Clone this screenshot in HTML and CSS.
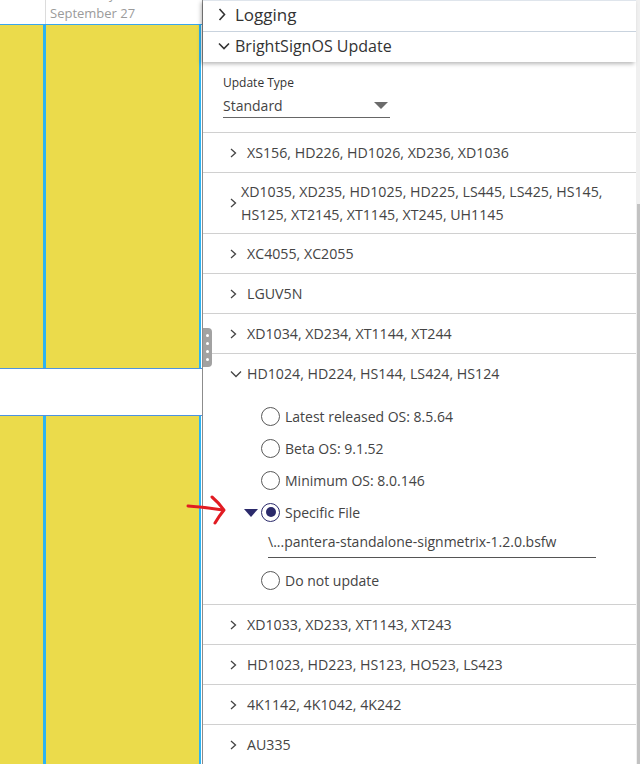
FILE: index.html
```html
<!DOCTYPE html>
<html lang="en">
<head>
  <meta charset="UTF-8">
  <title>BrightSignOS Update</title>
  <link rel="stylesheet" href="styles.css">
</head>
<body>

  <div class="screen">

    <div class="calendar">
      <div class="cal-head">
        <div class="time-col"></div>
        <div class="day-col">
          <div class="day-name">Wednesday</div>
          <div class="day-date">September 27</div>
        </div>
      </div>
      <div class="cal-block first">
        <div class="ev-prev"></div>
        <div class="ev-main"></div>
      </div>
      <div class="cal-gap"></div>
      <div class="cal-block last">
        <div class="ev-prev"></div>
        <div class="ev-main"></div>
      </div>
    </div>

    <div class="splitter">
      <span></span><span></span><span></span><span></span>
    </div>

    <div class="panel">
      <div class="card">
        <div class="acc-head logging">
          <svg class="chev-big" width="8" height="13" viewBox="0 0 8 13"><polyline points="1.5,1 6.5,6.5 1.5,12" /></svg>
          <span>Logging</span>
        </div>
        <div class="acc-head update">
          <svg class="chev-down-big" width="12" height="8" viewBox="0 0 12 8"><polyline points="1,1.5 6,6.5 11,1.5" /></svg>
          <span>BrightSignOS Update</span>
        </div>
      </div>

      <div class="update-type">
        <div class="field-label">Update Type</div>
        <div class="select">
          <span>Standard</span>
          <span class="select-arrow"></span>
        </div>
      </div>

      <div class="models">
        <div class="row">
          <svg class="chev" width="7" height="10" viewBox="0 0 7 10"><polyline points="1,1 5.5,5 1,9" /></svg>
          <span>XS156, HD226, HD1026, XD236, XD1036</span>
        </div>
        <div class="row wrap">
          <svg class="chev" width="7" height="10" viewBox="0 0 7 10"><polyline points="1,1 5.5,5 1,9" /></svg>
          <span>XD1035, XD235, HD1025, HD225, LS445, LS425, HS145,<br>HS125, XT2145, XT1145, XT245, UH1145</span>
        </div>
        <div class="row">
          <svg class="chev" width="7" height="10" viewBox="0 0 7 10"><polyline points="1,1 5.5,5 1,9" /></svg>
          <span>XC4055, XC2055</span>
        </div>
        <div class="row">
          <svg class="chev" width="7" height="10" viewBox="0 0 7 10"><polyline points="1,1 5.5,5 1,9" /></svg>
          <span>LGUV5N</span>
        </div>
        <div class="row">
          <svg class="chev" width="7" height="10" viewBox="0 0 7 10"><polyline points="1,1 5.5,5 1,9" /></svg>
          <span>XD1034, XD234, XT1144, XT244</span>
        </div>

        <div class="section open">
          <div class="row head">
            <svg class="chev-down" width="12" height="8" viewBox="0 0 12 8"><polyline points="1,1.5 6,6.5 11,1.5" /></svg>
            <span>HD1024, HD224, HS144, LS424, HS124</span>
          </div>
          <div class="options">
            <label class="option"><span class="radio"></span>Latest released OS: 8.5.64</label>
            <label class="option"><span class="radio"></span>Beta OS: 9.1.52</label>
            <label class="option"><span class="radio"></span>Minimum OS: 8.0.146</label>
            <label class="option marked"><span class="marker"></span><span class="radio checked"></span>Specific File</label>
            <div class="file-input">\...pantera-standalone-signmetrix-1.2.0.bsfw</div>
            <label class="option last"><span class="radio"></span>Do not update</label>
          </div>
        </div>

        <div class="row">
          <svg class="chev" width="7" height="10" viewBox="0 0 7 10"><polyline points="1,1 5.5,5 1,9" /></svg>
          <span>XD1033, XD233, XT1143, XT243</span>
        </div>
        <div class="row">
          <svg class="chev" width="7" height="10" viewBox="0 0 7 10"><polyline points="1,1 5.5,5 1,9" /></svg>
          <span>HD1023, HD223, HS123, HO523, LS423</span>
        </div>
        <div class="row">
          <svg class="chev" width="7" height="10" viewBox="0 0 7 10"><polyline points="1,1 5.5,5 1,9" /></svg>
          <span>4K1142, 4K1042, 4K242</span>
        </div>
        <div class="row">
          <svg class="chev" width="7" height="10" viewBox="0 0 7 10"><polyline points="1,1 5.5,5 1,9" /></svg>
          <span>AU335</span>
        </div>
        <div class="row"></div>
      </div>
    </div>

    <div class="scrollbar"><div class="thumb"></div></div>

    <!-- annotation arrow -->
    <svg class="red-arrow" width="46" height="36" viewBox="0 0 46 36">
      <path d="M4 14 Q 20 15 39 18" />
      <path d="M28 5 Q 35 11 40 18 Q 35 24 31 31" />
    </svg>

  </div>

</body>
</html>
```

FILE: styles.css
```css
body {
  margin: 0;
  font-family: "Open Sans", "Segoe UI", sans-serif;
  background-color: #fff;
}

.screen {
  position: relative;
  display: flex;
  width: 640px;
  height: 764px;
  overflow: hidden;
}

/* Calendar */
.calendar {
  width: 202px;
  flex-shrink: 0;
  display: flex;
  flex-direction: column;
  border-right: 1px solid #8c8c8c;
}

.cal-head {
  display: flex;
  height: 24px;
  overflow: hidden;
}

.time-col {
  width: 45px;
  border-right: 1px solid #dcdcdc;
}

.day-col {
  flex: 1;
  padding-left: 4px;
  margin-top: -13px;
  color: #9b9b9b;
}

.day-name {
  font-size: 12px;
  line-height: 16px;
}

.day-date {
  font-size: 13px;
  line-height: 20px;
}

.cal-block {
  display: flex;
  padding-right: 1px;
}

.cal-block.first {
  height: 343px;
  border-top: 1px solid #3aa6ee;
}

.cal-block.last {
  flex: 1;
}

.cal-gap {
  height: 46px;
  border-top: 1px solid #4d93e0;
  border-bottom: 1px solid #4d93e0;
}

.ev-prev {
  width: 43px;
  background-color: #ebdb4b;
}

.ev-main {
  flex: 1;
  background-color: #ebdb4b;
  border-left: 3px solid #2db3f2;
  border-right: 2px solid #2db3f2;
}

.splitter {
  position: absolute;
  left: 203px;
  top: 328px;
  width: 9px;
  height: 39px;
  background-color: #a2a2a2;
  border-radius: 0 4px 4px 0;
  display: flex;
  flex-direction: column;
  align-items: center;
  justify-content: space-around;
  padding: 4px 0;
  box-sizing: border-box;
  z-index: 3;
}

.splitter span {
  width: 3px;
  height: 3px;
  border-radius: 50%;
  background-color: #fff;
}

/* Panel */
.panel {
  flex: 1;
  display: flex;
  flex-direction: column;
  background-color: #fff;
}

.card {
  position: relative;
  z-index: 2;
  background-color: #fff;
  box-shadow: -2px 2px 4px rgba(0,0,0,0.28);
}

.acc-head {
  display: flex;
  align-items: center;
  padding-left: 15px;
  color: #333;
  box-sizing: border-box;
}

.acc-head.logging {
  height: 32px;
  padding-bottom: 4px;
  border-top: 1px solid #dfe5ec;
  border-bottom: 1px solid #c9d3de;
  font-size: 17px;
  gap: 9px;
}

.acc-head.update {
  height: 30px;
  padding-bottom: 2px;
  font-size: 16px;
  gap: 5px;
}

.acc-head svg polyline {
  fill: none;
  stroke: #333;
  stroke-width: 1.6;
}

.update-type {
  padding: 13px 0 14px 20px;
}

.field-label {
  font-size: 12px;
  line-height: 16px;
  color: #333;
}

.select {
  width: 167px;
  height: 23px;
  margin-top: 3px;
  border-bottom: 1px solid #666;
  display: flex;
  align-items: center;
  justify-content: space-between;
  font-size: 14px;
  color: #444;
}

.select-arrow {
  width: 0;
  height: 0;
  margin-right: 2px;
  border-left: 7px solid transparent;
  border-right: 7px solid transparent;
  border-top: 7px solid #6b6b6b;
}

.models {
  border-bottom: 1px solid #d0d0d0;
}

.row {
  display: flex;
  align-items: center;
  min-height: 39px;
  padding-left: 27px;
  border-top: 1px solid #d0d0d0;
  font-size: 14.2px;
  color: #444;
  gap: 10px;
}

.row.wrap {
  min-height: 60px;
  gap: 4px;
  line-height: 23px;
}

.row.head {
  gap: 5px;
}

.row svg polyline {
  fill: none;
  stroke: #444;
  stroke-width: 1.3;
}

.options {
  padding: 7px 0 8px 58px;
}

.option {
  position: relative;
  display: flex;
  align-items: center;
  gap: 5px;
  height: 32px;
  font-size: 14px;
  color: #444;
}

.option.last {
  margin-top: 6px;
}

.radio {
  width: 17px;
  height: 17px;
  border: 1.4px solid #595959;
  border-radius: 50%;
  display: flex;
  align-items: center;
  justify-content: center;
}

.radio.checked {
  border-color: #2b2a6b;
}

.radio.checked::after {
  content: "";
  width: 10px;
  height: 10px;
  border-radius: 50%;
  background-color: #2b2a6b;
}

.marker {
  position: absolute;
  left: -17px;
  top: 13px;
  width: 0;
  height: 0;
  border-left: 7px solid transparent;
  border-right: 7px solid transparent;
  border-top: 8px solid #2b2a6b;
}

.file-input {
  margin: 3px 0 0 7px;
  width: 328px;
  line-height: 22px;
  padding-bottom: 4px;
  border-bottom: 1px solid #555;
  font-size: 14px;
  color: #444;
}

/* Scrollbar */
.scrollbar {
  width: 4px;
  flex-shrink: 0;
  background-color: #f0f0f0;
  display: flex;
  flex-direction: column;
  align-items: flex-end;
}

.thumb {
  width: 3px;
  margin-top: 204px;
  flex: 1;
  background-color: #c2c2c2;
}

.red-arrow {
  position: absolute;
  left: 184px;
  top: 492px;
  z-index: 4;
}

.red-arrow path {
  fill: none;
  stroke: #e11b22;
  stroke-width: 3;
  stroke-linecap: round;
  stroke-linejoin: round;
}
```
